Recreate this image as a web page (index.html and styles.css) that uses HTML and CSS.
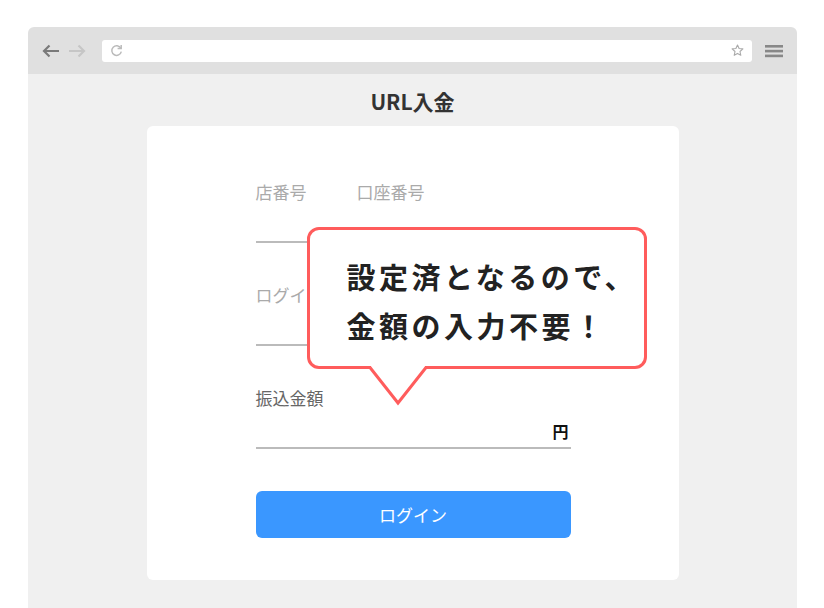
FILE: index.html
```html
<!DOCTYPE html>
<html lang="ja">
<head>
    <meta charset="UTF-8">
    <meta name="viewport" content="width=device-width, initial-scale=1.0">
    <title>URL入金</title>
    <link rel="stylesheet" href="styles.css">
</head>
<body>
    <div class="window">
        <div class="toolbar">
            <svg class="nav back" width="19" height="14" viewBox="0 0 19 14">
                <path d="M18 7H3M8.5 1.5L3 7l5.5 5.5" fill="none" stroke="#7a7a7a" stroke-width="2.2"/>
            </svg>
            <svg class="nav forward" width="18" height="14" viewBox="0 0 18 14">
                <path d="M0 7h15M9.5 1.5L15 7l-5.5 5.5" fill="none" stroke="#c6c6c6" stroke-width="2.2"/>
            </svg>
            <div class="address">
                <svg width="13" height="13" viewBox="0 0 13 13">
                    <path d="M10.8 4.2A4.8 4.8 0 1 0 11.3 7.6" fill="none" stroke="#bbb" stroke-width="1.5"/>
                    <path d="M11.2 1v3.6H7.6" fill="none" stroke="#bbb" stroke-width="1.5"/>
                </svg>
                <svg width="13" height="13" viewBox="0 0 13 13">
                    <path d="M6.5 1l1.6 3.5 3.8.4-2.9 2.6.8 3.8-3.3-1.9-3.3 1.9.8-3.8L1.1 4.9l3.8-.4z" fill="none" stroke="#aaa" stroke-width="1.1" stroke-linejoin="round"/>
                </svg>
            </div>
            <svg class="menu" width="18" height="14" viewBox="0 0 18 14">
                <rect x="0" y="1" width="18" height="2.6" fill="#888"/>
                <rect x="0" y="5.8" width="18" height="2.6" fill="#888"/>
                <rect x="0" y="10.6" width="18" height="2.6" fill="#888"/>
            </svg>
        </div>

        <div class="content">
            <h1 class="title">URL入金</h1>

            <div class="card">
                <div class="row-2">
                    <div class="field">
                        <span class="placeholder">店番号</span>
                    </div>
                    <div class="field">
                        <span class="placeholder">口座番号</span>
                    </div>
                </div>

                <div class="field">
                    <span class="placeholder">ログイ</span>
                </div>

                <div class="amount">
                    <label class="label">振込金額</label>
                    <div class="amount-input">
                        <span class="unit">円</span>
                    </div>
                </div>

                <button class="login-btn">ログイン</button>

                <div class="bubble">
                    <p>設定済となるので、<br>金額の入力不要！</p>
                    <svg class="tail" width="72" height="48" viewBox="0 0 72 48">
                        <rect x="9" y="4" width="54" height="6" fill="#fff"/>
                        <polyline points="8,7.5 36,43 64,7.5" fill="#fff" stroke="#ff5c5c" stroke-width="3"/>
                    </svg>
                </div>
            </div>
        </div>
    </div>
</body>
</html>
```

FILE: styles.css
```css
* {
    box-sizing: border-box;
}

body {
    margin: 0;
    background: #fff;
    font-family: "Noto Sans CJK JP", "Noto Sans", sans-serif;
}

.window {
    margin: 27px 27px 0 28px;
    border-radius: 6px 6px 0 0;
    overflow: hidden;
}

.toolbar {
    height: 47px;
    background: #e0e0e0;
    display: flex;
    align-items: center;
    padding: 0 14px 0 13px;
}

.nav.back {
    margin-right: 9px;
}

.nav.forward {
    margin-right: 15px;
}

.address {
    flex: 1;
    height: 22px;
    background: #fff;
    border-radius: 3px;
    display: flex;
    align-items: center;
    justify-content: space-between;
    padding: 0 8px 0 8px;
}

.menu {
    margin-left: 13px;
}

.content {
    background: #f0f0f0;
    padding: 14px 0 40px;
}

.title {
    margin: 0 0 12px;
    text-align: center;
    font-size: 21px;
    line-height: 26px;
    font-weight: bold;
    color: #333;
}

.card {
    position: relative;
    width: 532px;
    margin: 0 auto;
    background: #fff;
    border-radius: 6px;
    padding: 54px 108px 42px 109px;
}

.row-2 {
    display: grid;
    grid-template-columns: 85px 1fr;
    gap: 16px;
    margin-bottom: 40px;
}

.field {
    height: 63px;
    border-bottom: 2px solid #bbb;
    margin-bottom: 40px;
}

.row-2 .field {
    margin-bottom: 0;
}

.placeholder,
.label {
    display: block;
    font-size: 17px;
    line-height: 24px;
    color: #aaa;
    white-space: nowrap;
}

.label {
    color: #666;
}

.amount {
    margin-bottom: 42px;
}

.amount-input {
    height: 39px;
    border-bottom: 2px solid #bbb;
    display: flex;
    justify-content: flex-end;
    align-items: flex-end;
    padding: 0 2px 4px 0;
}

.unit {
    font-size: 16px;
    line-height: 24px;
    font-weight: bold;
    color: #111;
}

.login-btn {
    display: block;
    width: 100%;
    height: 47px;
    border: 0;
    border-radius: 6px;
    background: #3a97ff;
    color: #fff;
    font-family: inherit;
    font-size: 17px;
}

.bubble {
    position: absolute;
    left: 160px;
    top: 101px;
    width: 340px;
    height: 142px;
    background: #fff;
    border: 3px solid #ff5c5c;
    border-radius: 12px;
    padding: 22px 0 0 37px;
}

.bubble p {
    margin: 0;
    font-size: 29px;
    line-height: 49px;
    font-weight: bold;
    color: #222;
    letter-spacing: 3.5px;
}

.tail {
    position: absolute;
    left: 52px;
    top: 130px;
}
```
